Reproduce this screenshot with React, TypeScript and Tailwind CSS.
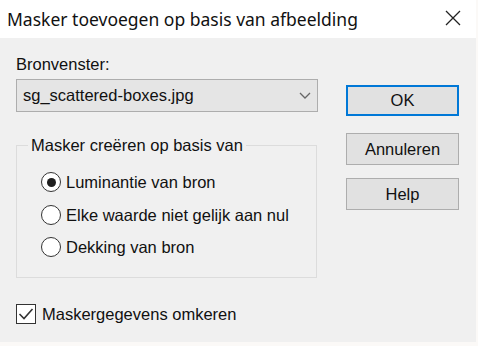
import React from "react";

const ui = { fontFamily: '"Liberation Sans", Arial, sans-serif' };

function Radio({ checked, label }: { checked?: boolean; label: string }) {
  return (
    <div className="flex h-[32.5px] items-center">
      <span className="flex h-[20px] w-[20px] shrink-0 items-center justify-center rounded-full border-[1.5px] border-[#333] bg-white">
        {checked && <span className="h-[9px] w-[9px] rounded-full bg-[#1e1e1e]" />}
      </span>
      <span className="ml-[5px] text-[16.5px] leading-[20px] text-[#111]">{label}</span>
    </div>
  );
}

function Button({ children, primary }: { children: React.ReactNode; primary?: boolean }) {
  return (
    <button
      type="button"
      className={
        primary
          ? "flex h-[31px] w-[113px] items-center justify-center border-2 border-[#0078d7] bg-[#e1e1e1] text-[16.5px] text-[#111]"
          : "flex h-[32px] w-[113px] items-center justify-center border border-[#adadad] bg-[#e1e1e1] text-[16.5px] text-[#111]"
      }
    >
      {children}
    </button>
  );
}

export default function App() {
  return (
    <div className="h-[346px] w-[478px] bg-[#fbf9f7]" style={ui}>
      {/* title bar */}
      <div className="flex h-[38px] w-[476px] items-center justify-between bg-white pl-[7px] pr-[15px]">
        <span className="text-[17.5px] text-[#111]" style={{ fontFamily: '"Noto Sans", "Open Sans", sans-serif' }}>
          Masker toevoegen op basis van afbeelding
        </span>
        <svg width="16" height="16" viewBox="0 0 16 16" className="mt-[-2px]">
          <path d="M1 1 L15 15 M15 1 L1 15" stroke="#222" strokeWidth="1.3" fill="none" />
        </svg>
      </div>

      {/* body */}
      <div className="flex h-[304px] w-[476px] bg-[#f0f0f0] pl-[16px]">
        <div className="flex w-[302px] flex-col">
          <div className="mt-[16px] text-[16.5px] leading-[20px] text-[#111]">Bronvenster:</div>
          <div className="mt-[5px] flex h-[33px] items-center justify-between border border-[#adadad] bg-[#e5e5e5] pl-[6px] pr-[6px]">
            <span className="text-[16.5px] text-[#111]">sg_scattered-boxes.jpg</span>
            <svg width="12" height="7" viewBox="0 0 12 7">
              <path d="M1 1 L6 6 L11 1" stroke="#666" strokeWidth="1.3" fill="none" />
            </svg>
          </div>

          <fieldset className="mt-[23px] h-[143px] w-[301px] border border-[#dcdcdc] pl-[11px]">
            <legend className="px-[3px] text-[16.5px] leading-[20px] text-[#111]">Masker creëren op basis van</legend>
            <div className="ml-[13px] mt-[11px] flex flex-col">
              <Radio checked label="Luminantie van bron" />
              <Radio label="Elke waarde niet gelijk aan nul" />
              <Radio label="Dekking van bron" />
            </div>
          </fieldset>

          <div className="mt-[26px] flex items-center">
            <span className="flex h-[20px] w-[20px] items-center justify-center border-[1.5px] border-[#333] bg-white">
              <svg width="16" height="14" viewBox="0 0 16 14">
                <path d="M1.5 7 L6 11.5 L14.5 2" stroke="#333" strokeWidth="1.6" fill="none" />
              </svg>
            </span>
            <span className="ml-[6px] text-[16.5px] leading-[20px] text-[#111]">Maskergegevens omkeren</span>
          </div>
        </div>

        <div className="ml-[28px] flex flex-col pt-[47px]">
          <Button primary>OK</Button>
          <div className="mt-[17px]">
            <Button>Annuleren</Button>
          </div>
          <div className="mt-[13px]">
            <Button>Help</Button>
          </div>
        </div>
      </div>
    </div>
  );
}
